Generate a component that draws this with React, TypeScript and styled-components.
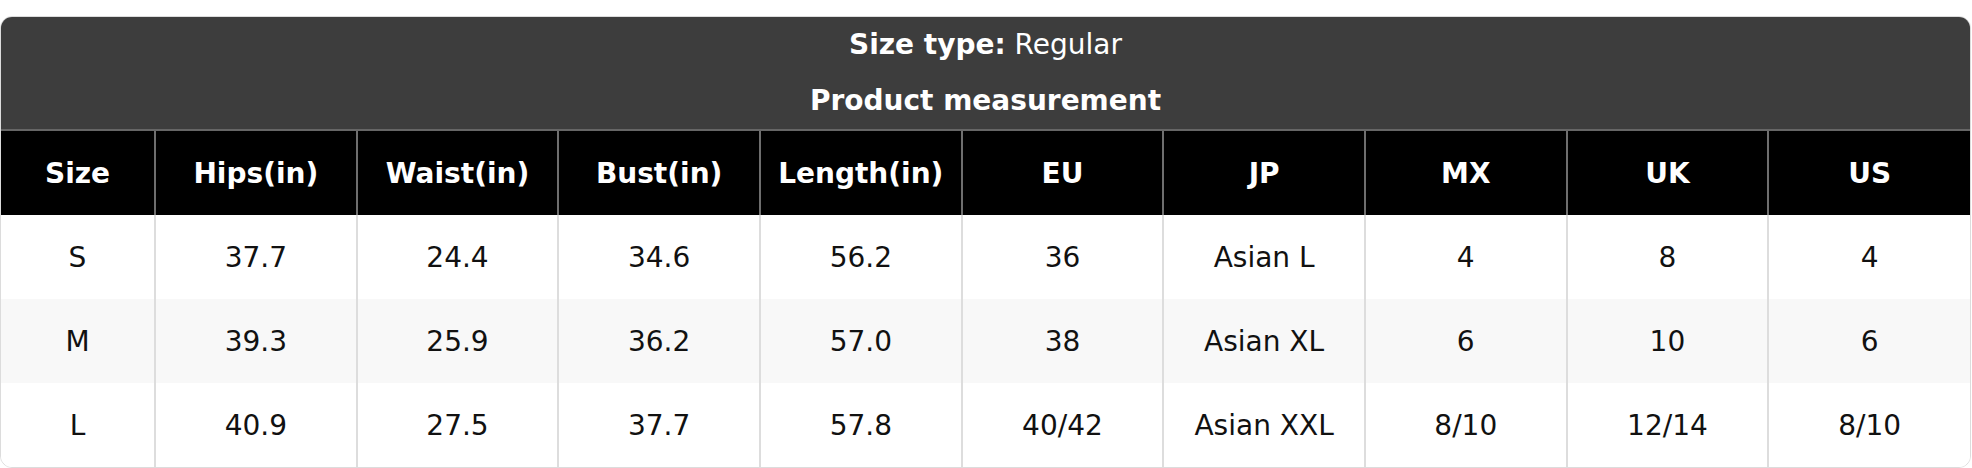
import { createGlobalStyle, styled } from "styled-components";

const GlobalStyle = createGlobalStyle`
    body {
        margin: 0;
        background: #ffffff;
        font-family: "DejaVu Sans", "Liberation Sans", sans-serif;
    }
`;

const Page = styled.div`
    padding-top: 16px;
    width: 1971px;
`;

const Card = styled.div`
    border: 1px solid #dcdcdc;
    border-radius: 12px;
    overflow: hidden;
    background: #ffffff;
`;

const TitleBlock = styled.div`
    background: #3d3d3d;
    color: #ffffff;
    display: flex;
    flex-direction: column;
    align-items: center;
`;

const TitleLine = styled.div<{ $h: number }>`
    height: ${(p) => p.$h}px;
    display: flex;
    align-items: center;
    justify-content: center;
    font-size: 28px;
    white-space: pre;

    b {
        font-weight: 700;
    }
`;

const Table = styled.table`
    width: 100%;
    border-collapse: collapse;
    table-layout: fixed;
    font-size: 28px;
`;

const HeadCell = styled.th`
    background: #000000;
    color: #ffffff;
    font-weight: 700;
    height: 84px;
    padding: 0;
    text-align: center;
    border-top: 2px solid #666666;
    border-left: 2px solid #6e6e6e;

    &:first-child {
        border-left: none;
    }
`;

const Row = styled.tr<{ $alt: boolean }>`
    background: ${(p) => (p.$alt ? "#f8f8f8" : "#ffffff")};
`;

const Cell = styled.td`
    height: 84px;
    padding: 0;
    text-align: center;
    color: #111111;
    border-left: 2px solid #dddddd;

    &:first-child {
        border-left: none;
    }
`;

const headers = ["Size", "Hips(in)", "Waist(in)", "Bust(in)", "Length(in)", "EU", "JP", "MX", "UK", "US"];

const rows = [
    ["S", "37.7", "24.4", "34.6", "56.2", "36", "Asian L", "4", "8", "4"],
    ["M", "39.3", "25.9", "36.2", "57.0", "38", "Asian XL", "6", "10", "6"],
    ["L", "40.9", "27.5", "37.7", "57.8", "40/42", "Asian XXL", "8/10", "12/14", "8/10"],
];

export default function App() {
    return (
        <Page>
            <GlobalStyle />
            <Card>
                <TitleBlock>
                    <TitleLine $h={54}>
                        <b>Size type:</b> Regular
                    </TitleLine>
                    <TitleLine $h={58}>
                        <b>Product measurement</b>
                    </TitleLine>
                </TitleBlock>
                <Table>
                    <colgroup>
                        <col style={{ width: 154 }} />
                    </colgroup>
                    <thead>
                        <tr>
                            {headers.map((h) => (
                                <HeadCell key={h}>{h}</HeadCell>
                            ))}
                        </tr>
                    </thead>
                    <tbody>
                        {rows.map((r, i) => (
                            <Row key={r[0]} $alt={i % 2 === 1}>
                                {r.map((c, j) => (
                                    <Cell key={j}>{c}</Cell>
                                ))}
                            </Row>
                        ))}
                    </tbody>
                </Table>
            </Card>
        </Page>
    );
}
